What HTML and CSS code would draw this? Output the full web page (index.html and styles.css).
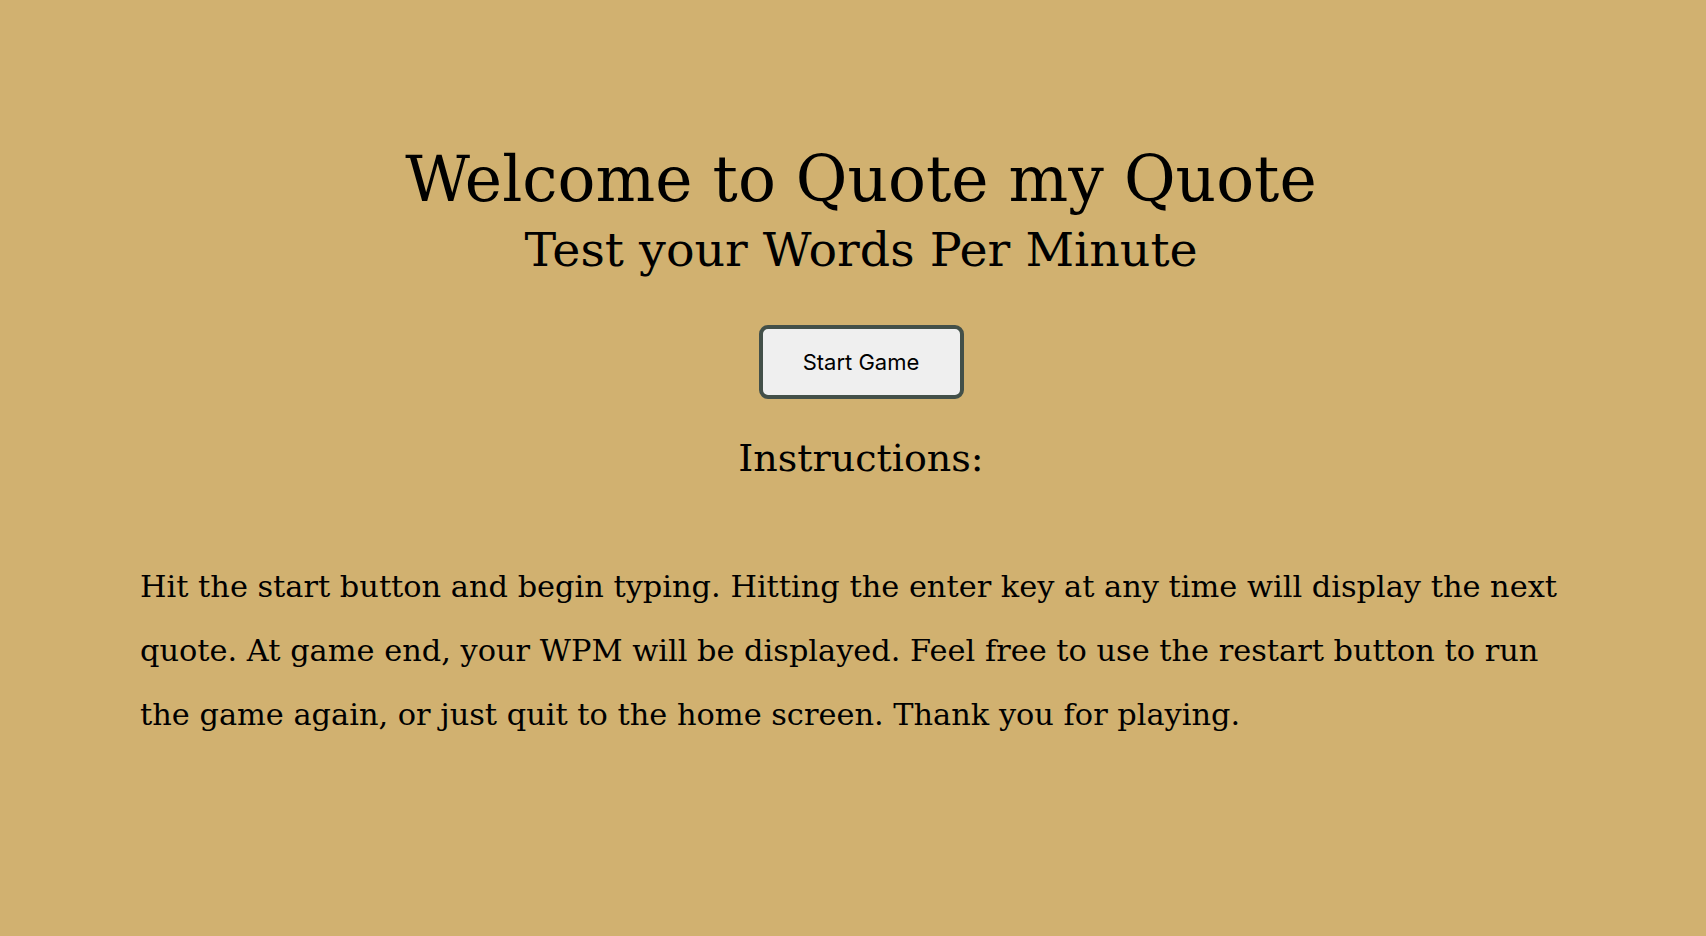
FILE: index.html
```html
<!DOCTYPE html>
<html lang="en">
<head>
<meta charset="utf-8">
<title>Quote my Quote</title>
<link rel="stylesheet" href="styles.css">
</head>
<body>
<main class="home">
  <h1 class="title">Welcome to Quote my Quote</h1>
  <h2 class="subtitle">Test your Words Per Minute</h2>
  <button class="start-btn" type="button">Start Game</button>
  <h3 class="instructions-title">Instructions:</h3>
  <p class="instructions">Hit the start button and begin typing. Hitting the enter key at any time will display the next quote. At game end, your WPM will be displayed. Feel free to use the restart button to run the game again, or just quit to the home screen. Thank you for playing.</p>
</main>
</body>
</html>
```
FILE: styles.css
```css
html, body {
  margin: 0;
  padding: 0;
  height: 100%;
}
body {
  background: #d1b170;
  color: #000;
  font-family: "DejaVu Serif", "Liberation Serif", serif;
}
.home {
  display: flex;
  flex-direction: column;
  align-items: center;
  padding: 140px 124px 0 140px;
}
.title {
  margin: 0;
  font-size: 63px;
  font-weight: 400;
  line-height: 80px;
}
.subtitle {
  margin: 0;
  font-size: 47.5px;
  font-weight: 400;
  line-height: 60px;
}
.start-btn {
  margin-top: 45px;
  width: 205px;
  height: 74px;
  background: #efefef;
  border: 4px solid #435049;
  border-radius: 9px;
  font-family: Inter, "Noto Sans", sans-serif;
  font-size: 22px;
  color: #000;
}
.instructions-title {
  margin: 35px 0 0;
  font-size: 38px;
  font-weight: 400;
  line-height: 48px;
}
.instructions {
  margin: 73px 0 0;
  align-self: stretch;
  font-size: 30.4px;
  line-height: 64px;
}
```
